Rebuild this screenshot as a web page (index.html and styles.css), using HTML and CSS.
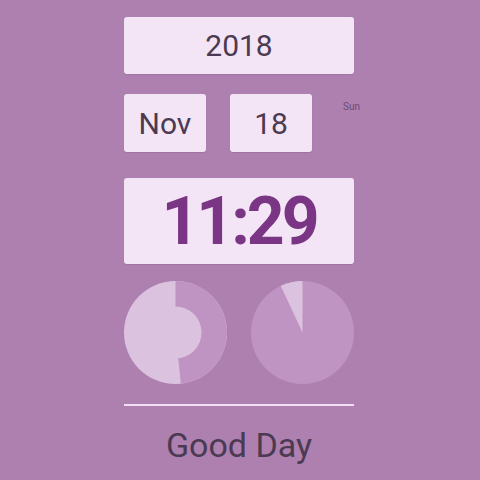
FILE: index.html
```html
<!DOCTYPE html>
<html>
<head>
<meta charset="utf-8">
<link rel="stylesheet" href="styles.css">
</head>
<body>
<div class="app">
  <div class="box year">2018</div>
  <div class="row">
    <div class="box month">Nov</div>
    <div class="box day">18</div>
    <div class="weekday">Sun</div>
  </div>
  <div class="box time">11:29</div>
  <div class="pies">
    <svg class="pie" width="103" height="103" viewBox="0 0 103 103">
      <circle cx="51.5" cy="51.5" r="51.5" fill="#dbc3df"/>
      <path d="M51.5,51.5 L51.5,0 A51.5,51.5 0 0 1 56.88,102.72 Z" fill="#c094c2"/>
      <circle cx="51.5" cy="51.5" r="26" fill="#dbc3df"/>
    </svg>
    <svg class="pie" width="103" height="103" viewBox="0 0 103 103">
      <circle cx="51.5" cy="51.5" r="51.5" fill="#c094c2"/>
      <path d="M51.5,51.5 L29.73,4.83 A51.5,51.5 0 0 1 51.5,0 Z" fill="#dbc3df"/>
    </svg>
  </div>
  <div class="divider"></div>
  <div class="greeting">Good Day</div>
</div>
</body>
</html>
```
FILE: styles.css
```css
html, body {
  margin: 0;
  padding: 0;
  background: #ad80af;
  height: 100%;
}
body {
  font-family: Roboto, "Liberation Sans", sans-serif;
  color: #4b3a51;
}
.app {
  width: 230px;
  margin-left: 124px;
  padding-top: 17px;
  display: flex;
  flex-direction: column;
}
.box {
  background: #f3e5f5;
  border-radius: 3px;
  display: flex;
  align-items: center;
  justify-content: center;
  box-shadow: 0 1px 1px rgba(80, 40, 90, 0.15);
}
.year {
  height: 57px;
  font-size: 30px;
}
.row {
  display: flex;
  margin-top: 20px;
  height: 58px;
}
.month {
  width: 82px;
  flex: none;
  font-size: 30px;
}
.day {
  width: 82px;
  flex: none;
  margin-left: 24px;
  font-size: 30px;
}
.weekday {
  font-size: 10px;
  line-height: 12px;
  color: #6e4b75;
  margin-left: 31px;
  margin-top: 7px;
}
.time {
  margin-top: 26px;
  height: 86px;
  font-size: 66px;
  letter-spacing: -3px;
  font-weight: bold;
  color: #7b3585;
}
.pies {
  display: flex;
  gap: 24px;
  margin-top: 17px;
  height: 103px;
}
.pie {
  display: block;
}
.divider {
  margin-top: 20px;
  height: 2px;
  background: #f0dff2;
}
.greeting {
  margin-top: 19px;
  text-align: center;
  font-size: 34px;
  line-height: 40px;
}
```
